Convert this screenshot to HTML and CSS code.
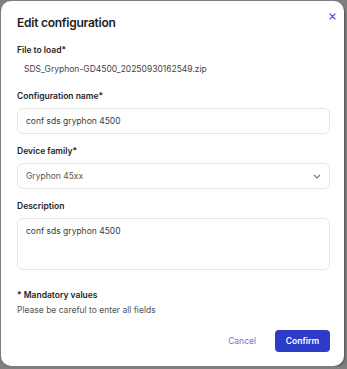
FILE: index.html
```html
<!DOCTYPE html>
<html lang="en">
  <head>
    <meta name="viewport" content="width=device-width, initial-scale=1">
    <link rel="stylesheet" href="styles.css">
  </head>
  <body>
    <div class="modal">
      <div class="modalHeader">
        <h1>Edit configuration</h1>
        <button class="close" aria-label="close">
          <svg width="7" height="7" viewBox="0 0 7 7"><path d="M1 1L6 6M6 1L1 6" stroke="#4d5bd6" stroke-width="1.2" stroke-linecap="round"/></svg>
        </button>
      </div>
      <div class="field fileField">
        <label>File to load*</label>
        <div class="fileName">SDS_Gryphon-GD4500_20250930162549.zip</div>
      </div>
      <div class="field">
        <label>Configuration name*</label>
        <div class="input">conf sds gryphon 4500</div>
      </div>
      <div class="field">
        <label>Device family*</label>
        <div class="input select">
          <span>Gryphon 45xx</span>
          <svg width="8" height="5" viewBox="0 0 8 5"><path d="M1 1L4 4L7 1" fill="none" stroke="#777" stroke-width="1.1"/></svg>
        </div>
      </div>
      <div class="field">
        <label>Description</label>
        <div class="input textarea">conf sds gryphon 4500</div>
      </div>
      <div class="note">
        <strong>* Mandatory values</strong>
        <span>Please be careful to enter all fields</span>
      </div>
      <div class="actions">
        <button class="cancel">Cancel</button>
        <button class="confirm">Confirm</button>
      </div>
    </div>
  </body>
</html>
```
FILE: styles.css
```css
body {
  margin: 0;
  background: #7f7f7f;
  font-family: Inter, "Noto Sans", sans-serif;
  color: #1e1e1e;
}
.modal {
  width: 343px;
  height: 365px;
  margin: 1px 0 0 1px;
  box-sizing: border-box;
  padding: 0 14px 0 16px;
  background: #ffffff;
  border-radius: 10px;
  box-shadow: 1px 1px 2px rgba(0, 0, 0, 0.35);
  display: flex;
  flex-direction: column;
}
.modalHeader {
  display: flex;
  justify-content: space-between;
  align-items: flex-start;
  padding-top: 14px;
  height: 44px;
  box-sizing: border-box;
}
h1 {
  margin: 0;
  font-size: 12px;
  line-height: 16px;
  font-weight: 600;
  letter-spacing: -0.25px;
}
.close {
  border: none;
  background: none;
  padding: 0;
  margin: -4px -7px 0 0;
  width: 10px;
  height: 10px;
  display: flex;
  align-items: center;
  justify-content: center;
}
.field {
  display: flex;
  flex-direction: column;
  margin-bottom: 12px;
}
.fileField {
  margin-bottom: 16px;
}
label {
  font-size: 8.5px;
  line-height: 11px;
  font-weight: 600;
  margin-bottom: 6px;
}
.fileName {
  font-size: 8.5px;
  line-height: 11px;
  color: #444;
  padding: 2px 0 0 7px;
}
.input {
  height: 26px;
  box-sizing: border-box;
  border: 1px solid #e6e6e6;
  border-radius: 6px;
  padding: 0 8px;
  display: flex;
  align-items: center;
  font-size: 8.5px;
  color: #3a3a3a;
}
.select {
  justify-content: space-between;
  color: #555;
  padding-right: 8px;
}
.textarea {
  height: 52px;
  align-items: flex-start;
  padding-top: 7px;
}
.note {
  display: flex;
  flex-direction: column;
  margin-top: 8px;
  font-size: 8.5px;
  line-height: 11px;
}
.note strong {
  font-weight: 600;
  margin-bottom: 4px;
}
.note span {
  color: #555;
}
.actions {
  display: flex;
  justify-content: flex-end;
  align-items: center;
  gap: 19px;
  margin-top: 14px;
}
button {
  font-family: inherit;
  cursor: pointer;
}
.cancel {
  border: none;
  background: none;
  color: #6a74d8;
  font-size: 8.5px;
  padding: 0;
}
.confirm {
  width: 55px;
  height: 22px;
  border: none;
  border-radius: 4px;
  background: #2c3bc8;
  color: #ffffff;
  font-size: 8.5px;
  font-weight: 600;
}
```
